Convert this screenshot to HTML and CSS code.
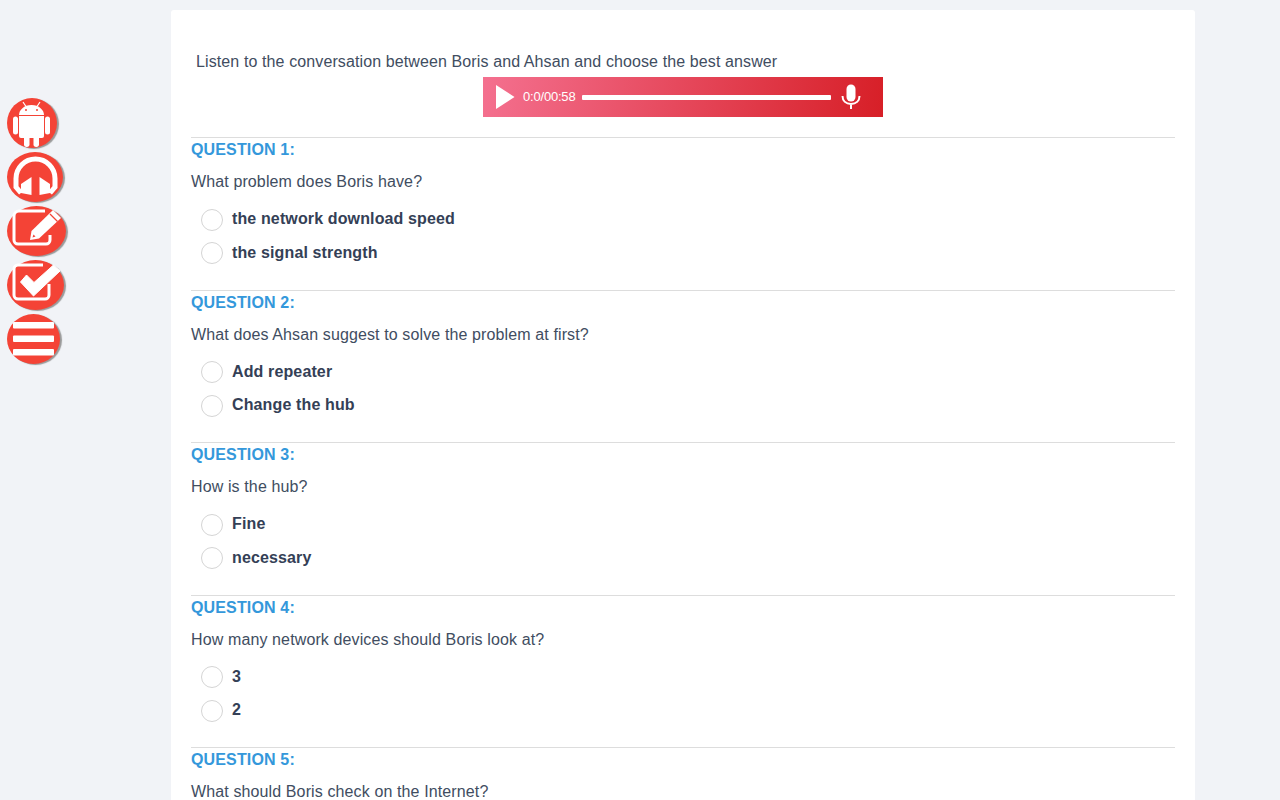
FILE: index.html
```html
<!DOCTYPE html>
<html lang="en">
<head>
    <meta charset="UTF-8">
    <meta name="viewport" content="width=device-width, initial-scale=1.0">
    <title>Listening Test</title>
    <link rel="stylesheet" href="styles.css">
</head>
<body>
    <nav class="side-menu">
        <a class="side-icon android" href="#">
            <svg width="50" height="50" viewBox="0 0 50 50" fill="#fff">
                <path d="M12 17c0-5 5-10 12.500-10S37 12 37 17z"/>
                <path d="M16 4l3 4.500M33 4l-3 4.500" stroke="#fff" stroke-width="1.200"/>
                <circle cx="19" cy="12" r="1" fill="#f44336"/>
                <circle cx="30" cy="12" r="1" fill="#f44336"/>
                <path d="M12 18h25v20a2 2 0 0 1-2 2H14a2 2 0 0 1-2-2z"/>
                <rect x="6" y="18.500" width="5" height="18" rx="2.500"/>
                <rect x="38" y="18.500" width="5" height="18" rx="2.500"/>
                <rect x="17" y="36" width="5.500" height="13" rx="2.700"/>
                <rect x="26.500" y="36" width="5.500" height="13" rx="2.700"/>
            </svg>
        </a>
        <a class="side-icon headphones" href="#">
            <svg width="56" height="50" viewBox="0 0 56 50" fill="#fff">
                <path d="M14 41L9 35V26.500A19.500 19.500 0 0 1 48 26.500V35L43 41" fill="none" stroke="#fff" stroke-width="5"/>
                <path d="M24.500 25L14 32V41L24.500 43z"/>
                <path d="M32.500 25L43 32V41L32.500 43z"/>
            </svg>
        </a>
        <a class="side-icon edit" href="#">
            <svg width="59" height="50" viewBox="0 0 59 50" fill="#fff">
                <path d="M38 5H12a5 5 0 0 0-5 5v24a4 4 0 0 0 4 4h28a4 4 0 0 0 4-4v-5" fill="none" stroke="#fff" stroke-width="3"/>
                <path d="M23 34L24.500 25L46 4L54 12L32 32.500z"/>
                <path d="M43 8L50.500 15.500" stroke="#f44336" stroke-width="1.200"/>
                <path d="M25.500 31.500l1-3 2 2z" fill="#f44336"/>
            </svg>
        </a>
        <a class="side-icon check" href="#">
            <svg width="57" height="50" viewBox="0 0 57 50" fill="#fff">
                <path d="M36 5H11a4 4 0 0 0-4 4v26a4 4 0 0 0 4 4h27a4 4 0 0 0 4-4V24" fill="none" stroke="#fff" stroke-width="3"/>
                <path d="M13.500 22L19.500 15L27 22.500L46.500 5L53 11L26.500 36z" stroke="#fff" stroke-linejoin="round"/>
            </svg>
        </a>
        <a class="side-icon bars" href="#">
            <svg width="53" height="50" viewBox="0 0 53 50" fill="#fff">
                <rect x="6" y="8" width="41" height="6.500" rx="1"/>
                <rect x="6" y="21.500" width="41" height="6.500" rx="1"/>
                <rect x="6" y="35" width="41" height="6.500" rx="1"/>
            </svg>
        </a>
    </nav>

    <main class="card">
        <p class="intro">Listen to the conversation between Boris and Ahsan and choose the best answer</p>

        <div class="player">
            <svg class="play" width="20" height="24" viewBox="0 0 20 24" fill="#fff"><path d="M0 0l18.500 12L0 24z"/></svg>
            <span class="time">0:0/00:58</span>
            <div class="track"></div>
            <svg class="mic" width="20" height="26" viewBox="0 0 20 26" fill="none" stroke="#fff" stroke-width="2">
                <rect x="5.500" y="0.500" width="9" height="17" rx="4.500" fill="#fff" stroke="none"/>
                <path d="M1.500 12c0 5 3.500 8 8.500 8s8.500-3 8.500-8M10 20v5"/>
            </svg>
        </div>

        <section class="question">
            <h4>QUESTION 1:</h4>
            <p>What problem does Boris have?</p>
            <label class="option"><span class="radio"></span>the network download speed</label>
            <label class="option"><span class="radio"></span>the signal strength</label>
        </section>

        <section class="question">
            <h4>QUESTION 2:</h4>
            <p>What does Ahsan suggest to solve the problem at first?</p>
            <label class="option"><span class="radio"></span>Add repeater</label>
            <label class="option"><span class="radio"></span>Change the hub</label>
        </section>

        <section class="question">
            <h4>QUESTION 3:</h4>
            <p>How is the hub?</p>
            <label class="option"><span class="radio"></span>Fine</label>
            <label class="option"><span class="radio"></span>necessary</label>
        </section>

        <section class="question">
            <h4>QUESTION 4:</h4>
            <p>How many network devices should Boris look at?</p>
            <label class="option"><span class="radio"></span>3</label>
            <label class="option"><span class="radio"></span>2</label>
        </section>

        <section class="question">
            <h4>QUESTION 5:</h4>
            <p>What should Boris check on the Internet?</p>
        </section>
    </main>
</body>
</html>
```

FILE: styles.css
```css
* {
    margin: 0;
    padding: 0;
    box-sizing: border-box;
}

body {
    font-family: "Liberation Sans", Arial, sans-serif;
    font-size: 16px;
    background: #f1f3f7;
    color: #414d61;
}

.side-menu {
    position: fixed;
    left: 7px;
    top: 98px;
    display: flex;
    flex-direction: column;
    align-items: flex-start;
    gap: 4px;
}

.side-icon {
    display: block;
    height: 50px;
    background: #f44336;
    border-radius: 50%;
    box-shadow: 2px 1px 1px #999;
}

.side-icon svg {
    display: block;
}

.card {
    width: 1024px;
    margin: 10px 0 0 171px;
    padding: 42px 20px 20px;
    background: #fff;
    border-radius: 3px;
}

.intro {
    padding-left: 5px;
    line-height: 20px;
    letter-spacing: 0.11px;
}

.player {
    width: 400px;
    height: 40px;
    margin: 5px auto 20px;
    padding-left: 13px;
    display: flex;
    align-items: center;
    background: linear-gradient(100deg, #f4708f 0%, #d71f27 100%);
}

.time {
    margin: 0 0 2px 7px;
    font-size: 13px;
    letter-spacing: -0.2px;
    color: #fff;
    width: 59px;
}

.track {
    width: 249px;
    height: 5px;
    background: #fff;
    border-radius: 1px;
}

.mic {
    margin-left: 10px;
}

.question {
    border-top: 1px solid #ddd;
    height: 152.500px;
}

.question h4 {
    padding-top: 1px;
    font-size: 16px;
    line-height: 22px;
    font-weight: bold;
    letter-spacing: 0.15px;
    color: #3498db;
}

.question p {
    margin-top: 10px;
    line-height: 22px;
    margin-bottom: 9.500px;
    letter-spacing: 0.12px;
}

.option {
    display: flex;
    align-items: center;
    height: 33.500px;
    padding-left: 10px;
    font-weight: bold;
    letter-spacing: 0.13px;
    color: #344056;
}

.radio {
    width: 22px;
    height: 22px;
    margin: 1px 9px 0 0;
    border: 1px solid #d5d5d5;
    border-radius: 50%;
    background: #fff;
}
```
